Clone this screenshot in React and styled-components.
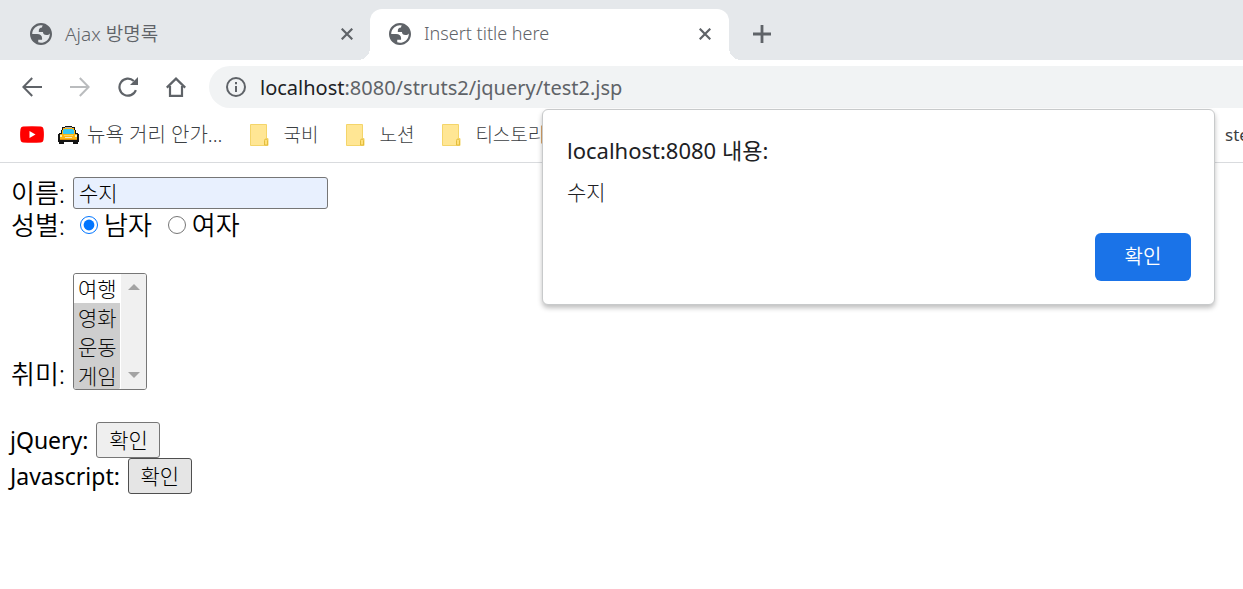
import React from "react";
import styled, { createGlobalStyle, css } from "styled-components";

const GlobalStyle = createGlobalStyle`
  * {
    box-sizing: border-box;
  }

  body {
    margin: 0;
    background-color: white;
    color: #000;
    font-family: "Noto Sans", "Noto Sans CJK KR", sans-serif;
  }
`;

const Browser = styled.div`
  position: relative;
  min-height: 100vh;
  overflow: hidden;
`;

const TabStrip = styled.div`
  display: flex;
  align-items: flex-end;
  height: 60px;
  background-color: #e5e8eb;
`;

const activeTab = css`
  width: 359px;
  padding: 0 18px 2px 19px;
  background-color: white;

  &::before,
  &::after {
    content: "";
    position: absolute;
    bottom: 0;
    width: 12px;
    height: 12px;
  }

  &::before {
    right: 100%;
    background: radial-gradient(circle at 0 0, transparent 12px, white 12px);
  }

  &::after {
    left: 100%;
    background: radial-gradient(circle at 100% 0, transparent 12px, white 12px);
  }
`;

const Tab = styled.div`
  position: relative;
  display: flex;
  align-items: center;
  gap: 13px;
  width: 370px;
  height: 51px;
  padding: 0 17px 2px 30px;
  border-radius: 12px 12px 0 0;
  color: #5f6368;
  font-size: ${props => props.$size};
  font-weight: 350;

  ${props => props.$active && activeTab}
`;

const TabTitle = styled.span`
  flex: 1;
  padding-bottom: 2px;
`;

const IconButton = styled.button`
  display: flex;
  padding: 0;
  border: 0;
  background: none;
  color: ${props => props.disabled ? "#babcbe" : "#5f6368"};
`;

const NewTabButton = styled(IconButton)`
  align-self: center;
  margin: 8px 0 0 24px;
`;

const Toolbar = styled.div`
  display: flex;
  align-items: center;
  gap: 28px;
  height: 54px;
  padding-left: 22px;
`;

const AddressBar = styled.div`
  display: flex;
  flex: 1;
  align-items: center;
  gap: 14px;
  height: 42px;
  margin-left: -5px;
  padding-left: 17px;
  border-radius: 21px 0 0 21px;
  background-color: #f1f3f4;
  color: #5f6368;
  font-size: 20px;

  strong {
    color: #202124;
    font-weight: 400;
  }
`;

const BookmarkBar = styled.nav`
  display: flex;
  align-items: center;
  gap: 28px;
  height: 49px;
  padding: 0 0 7px 20px;
  border-bottom: 1px solid #d9dbde;
`;

const Bookmark = styled.a`
  display: flex;
  align-items: center;
  gap: ${props => props.$folder ? "14px" : "8px"};
  color: #3c4043;
  font-size: ${props => props.$folder ? "19px" : "20px"};
  font-weight: 300;
  line-height: 24px;
  text-decoration: none;
  white-space: nowrap;

  svg {
    flex-shrink: 0;
  }
`;

const BookmarkGroup = styled.div`
  display: flex;
  align-items: center;
  gap: 14px;
`;

const CutBookmark = styled(Bookmark)`
  width: 18px;
  margin-left: auto;
  overflow: hidden;
  font-size: 17px;
  font-weight: 400;
`;

const Page = styled.form`
  display: flex;
  flex-direction: column;
  gap: 32px;
  padding: 14px 10px;
  font-size: 23px;
`;

const Row = styled.div`
  display: flex;
  align-items: ${props => props.$bottom ? "flex-end" : "center"};
  min-height: ${props => props.$height};
`;

const Label = styled.label`
  margin-right: 8px;
  line-height: 32px;
`;

const KoreanLabel = styled.label`
  min-width: 63px;
  padding-left: 1px;
  font-size: 26px;
  font-weight: 350;
  line-height: 32px;
`;

const TextInput = styled.input`
  width: 255px;
  height: 32px;
  padding: 0 5px 3px;
  border: 1px solid #767676;
  border-radius: 3px;
  background-color: #e8f0fe;
  font: inherit;
  font-size: 21px;
  font-weight: 300;
`;

const Choice = styled.label`
  display: flex;
  align-items: center;
  gap: 6px;
  margin: 0 9px 0 7px;
  font-size: 26px;
  font-weight: 350;
  line-height: 32px;
`;

const Radio = styled.input`
  width: 18px;
  height: 18px;
  margin: 0;
`;

const ListFrame = styled.div`
  display: flex;
  width: 74px;
  height: 117px;
  border: 1px solid #767676;
  border-radius: 3px;
  overflow: hidden;
`;

const ListBox = styled.select`
  width: 46px;
  height: 115px;
  padding: 0;
  border: 0;
  outline: 0;
  background-color: white;
  font-family: "Noto Sans CJK KR", sans-serif;
  font-size: 21px;
  font-weight: 300;
  overflow: hidden;

  option {
    display: flex;
    align-items: center;
    height: 29px;
    min-height: 29px;
    padding: 0 4px 2px;
    font-weight: 300;
  }

  option:checked {
    background: #cecece linear-gradient(#cecece, #cecece);
    color: #101010;
  }
`;

const ScrollTrack = styled.div`
  display: flex;
  flex: 1;
  flex-direction: column;
  align-items: center;
  justify-content: space-between;
  margin-left: 1px;
  padding: 10px 0 11px;
  background-color: #f0f0f0;
`;

const FormButton = styled.button`
  width: 64px;
  height: 36px;
  padding: 0 0 2px;
  border: 1px solid ${props => props.$pressed ? "#4f4f4f" : "#767676"};
  border-radius: 3px;
  background-color: ${props => props.$pressed ? "#e5e5e5" : "#efefef"};
  color: #000;
  font: inherit;
  font-size: 21px;
  font-weight: 300;
`;

const Dialog = styled.div`
  position: absolute;
  top: 109px;
  right: 28px;
  display: flex;
  flex-direction: column;
  width: 673px;
  max-width: 90%;
  padding: 23px 23px 23px 24px;
  border: 1px solid #c8cacb;
  border-radius: 6px;
  background-color: white;
  box-shadow: 0 3px 5px rgba(0, 0, 0, 0.25);
  color: #202124;
`;

const DialogTitle = styled.h1`
  margin: 0;
  font-size: 22px;
  font-weight: 400;
  line-height: 34px;
`;

const DialogText = styled.p`
  margin: 9px 0 25px;
  font-size: 21px;
  font-weight: 300;
  line-height: 32px;
`;

const DialogButton = styled.button`
  align-self: flex-end;
  width: 96px;
  height: 48px;
  padding: 0 0 3px;
  border: 0;
  border-radius: 6px;
  background-color: #1a73e8;
  color: white;
  font: inherit;
  font-size: 20px;
  font-weight: 350;
`;

const StrokeIcon = ({ size = 20, width = 2, children }) => (
    <svg
        width={size}
        height={size}
        viewBox={`0 0 ${size} ${size}`}
        fill="none"
        stroke="currentColor"
        strokeWidth={width}
        aria-hidden="true"
    >
        {children}
    </svg>
);

const GlobeIcon = () => (
    <svg width="22" height="22" viewBox="0 0 20 20" fill="#5f6368" aria-hidden="true">
        <path d="M10 20c-5.523 0-10-4.477-10-10S4.477 0 10 0s10 4.477 10 10-4.477 10-10 10zM2 10h4.4c3.407.022 4.922 1.73 4.543 5.127H7.488v2.47a8.004 8.004 0 0 0 10.498-8.083C17.327 10.504 16.332 11 15 11c-2.137 0-3.206-.916-3.206-2.75h-3.748c-.274-2.728.683-4.092 2.87-4.092 0-.975.327-1.597.811-1.97A8.004 8.004 0 0 0 2 10z" />
    </svg>
);

const CloseIcon = () => (
    <StrokeIcon size={12} width={2.2}>
        <path d="M.7.7 11.3 11.3M11.3.7.7 11.3" />
    </StrokeIcon>
);

const PlusIcon = () => (
    <StrokeIcon size={18} width={2.8}>
        <path d="M9 0v18M0 9h18" />
    </StrokeIcon>
);

const BackIcon = () => (
    <StrokeIcon>
        <path d="M20 10H1.5M10.2 1 1.4 10l8.8 9" />
    </StrokeIcon>
);

const ForwardIcon = () => (
    <StrokeIcon>
        <path d="M0 10h18.5M9.8 1l8.8 9-8.8 9" />
    </StrokeIcon>
);

const ReloadIcon = () => (
    <StrokeIcon width={2.2}>
        <path d="M17.9 13.2A8.5 8.5 0 1 1 15.8 4" />
        <path d="M20 0v8h-8z" fill="currentColor" stroke="none" />
    </StrokeIcon>
);

const HomeIcon = () => (
    <StrokeIcon width={2.2}>
        <path d="M.8 10.6 10 1.6l9.2 9M4 9v9.8h12V9" />
    </StrokeIcon>
);

const InfoIcon = () => (
    <StrokeIcon width={2}>
        <circle cx="10" cy="10" r="9" />
        <path d="M10 9v6M10 5v2.2" />
    </StrokeIcon>
);

const YoutubeIcon = () => (
    <svg width="24" height="17" viewBox="0 0 24 17" role="img" aria-label="YouTube">
        <path d="M3 .6Q12-.2 21 .6 23.2.8 23.5 3 24.3 8.500 23.5 14q-.3 2.200-2.500 2.400-9 .8-18 0Q.8 16.200.5 14-.3 8.500.5 3 .8.8 3 .6z" fill="#f00" />
        <path d="M9.500 5v7l6-3.500z" fill="#fff" />
    </svg>
);

const TaxiIcon = () => (
    <svg width="21" height="18" viewBox="0 0 21 18" aria-hidden="true">
        <path d="M7 0h7v1h3v3h1v3h2v1h1v8h-1v2h-5v-2H6v2H1v-2H0V8h1V7h2V4h1V1h3z" fill="#151515" />
        <path d="M7 1h7v1H7z" fill="#aaa" />
        <path d="M5 2h11v2h1v4h2v6H2V8h2V4h1z" fill="#fbb615" />
        <path d="M6 3h9v1h1v4H5V4h1z" fill="#35c8f4" />
        <path d="M2 13h17v1H2z" fill="#d98b0c" />
        <path d="M2 9h2v2H2zM17 9h2v2h-2z" fill="#fff3b0" />
        <path d="M7 11h7v1H7z" fill="#f2e8c8" />
        <path d="M6 9h9v1H6z" fill="#ffd75a" />
    </svg>
);

const FolderIcon = () => (
    <svg width="19" height="22" viewBox="0 0 19 22" aria-hidden="true">
        <path d="M.5.5h16v14h1.500v7H.5z" fill="#ffe694" stroke="#f4d56a" />
        <path d="M14.500 21v-4.500a1.500 1.500 0 0 1 3 0V21z" fill="#ffe07a" stroke="#e3bd3c" />
    </svg>
);

const ScrollArrow = ({ down }) => (
    <svg width="12" height="6" viewBox="0 0 12 6" fill="#a3a3a3" aria-hidden="true">
        <path d={down ? "M0 0h12L6 6z" : "M0 6h12L6 0z"} />
    </svg>
);

const folders = ["국비", "노션", "티스토리"];
const hobbies = ["여행", "영화", "운동", "게임"];

const App = () => {
    return (
        <Browser>
            <GlobalStyle />
            <TabStrip>
                <Tab $size="19px">
                    <GlobeIcon />
                    <TabTitle>Ajax 방명록</TabTitle>
                    <IconButton aria-label="Close tab"><CloseIcon /></IconButton>
                </Tab>
                <Tab $active $size="18px">
                    <GlobeIcon />
                    <TabTitle>Insert title here</TabTitle>
                    <IconButton aria-label="Close tab"><CloseIcon /></IconButton>
                </Tab>
                <NewTabButton aria-label="New tab"><PlusIcon /></NewTabButton>
            </TabStrip>
            <Toolbar>
                <IconButton aria-label="Back"><BackIcon /></IconButton>
                <IconButton aria-label="Forward" disabled><ForwardIcon /></IconButton>
                <IconButton aria-label="Reload"><ReloadIcon /></IconButton>
                <IconButton aria-label="Home"><HomeIcon /></IconButton>
                <AddressBar>
                    <InfoIcon />
                    <span><strong>localhost</strong>:8080/struts2/jquery/test2.jsp</span>
                </AddressBar>
            </Toolbar>
            <BookmarkBar>
                <BookmarkGroup>
                    <Bookmark href="#"><YoutubeIcon /></Bookmark>
                    <Bookmark href="#"><TaxiIcon />뉴욕 거리 안가...</Bookmark>
                </BookmarkGroup>
                {folders.map(name => (
                    <Bookmark href="#" $folder key={name}><FolderIcon />{name}</Bookmark>
                ))}
                <CutBookmark href="#">ste</CutBookmark>
            </BookmarkBar>
            <Page onSubmit={e => e.preventDefault()}>
                <div>
                    <Row $height="32px">
                        <KoreanLabel htmlFor="name">이름:</KoreanLabel>
                        <TextInput id="name" type="text" defaultValue="수지" />
                    </Row>
                    <Row $height="32px" role="radiogroup" aria-labelledby="gender">
                        <KoreanLabel as="span" id="gender">성별:</KoreanLabel>
                        <Choice><Radio type="radio" name="gender" defaultChecked />남자</Choice>
                        <Choice><Radio type="radio" name="gender" />여자</Choice>
                    </Row>
                </div>
                <Row $bottom>
                    <KoreanLabel htmlFor="hobby">취미:</KoreanLabel>
                    <ListFrame>
                        <ListBox id="hobby" multiple size={4} defaultValue={hobbies.slice(1)}>
                            {hobbies.map(hobby => <option key={hobby}>{hobby}</option>)}
                        </ListBox>
                        <ScrollTrack>
                            <ScrollArrow />
                            <ScrollArrow down />
                        </ScrollTrack>
                    </ListFrame>
                </Row>
                <div>
                    <Row>
                        <Label htmlFor="jquery">jQuery:</Label>
                        <FormButton id="jquery" type="button">확인</FormButton>
                    </Row>
                    <Row>
                        <Label htmlFor="javascript">Javascript:</Label>
                        <FormButton id="javascript" type="button" $pressed>확인</FormButton>
                    </Row>
                </div>
            </Page>
            <Dialog role="alertdialog" aria-labelledby="alert-title">
                <DialogTitle id="alert-title">localhost:8080 내용:</DialogTitle>
                <DialogText>수지</DialogText>
                <DialogButton type="button">확인</DialogButton>
            </Dialog>
        </Browser>
    );
};

export default App;
